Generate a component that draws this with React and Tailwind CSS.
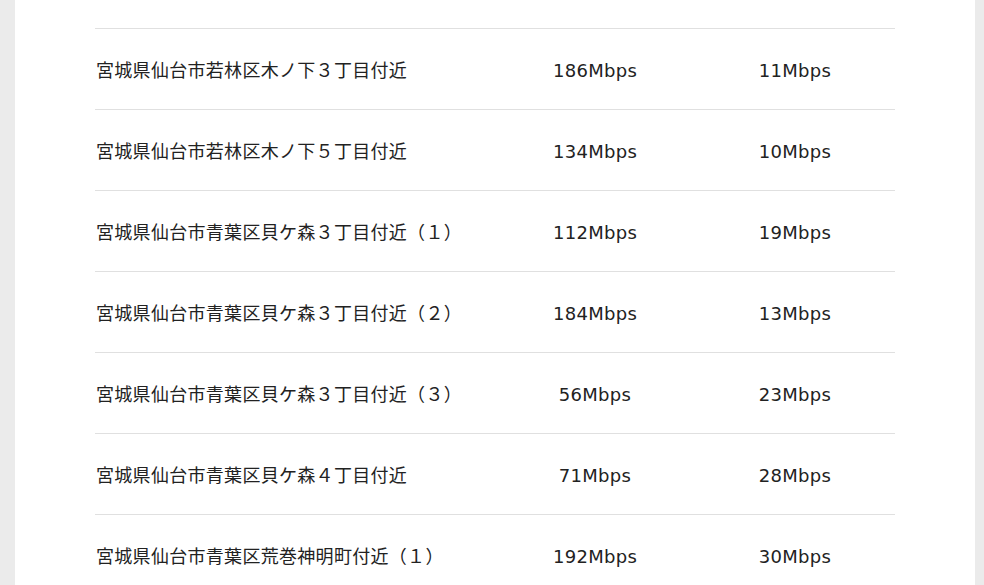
import React from 'react';

const rows = [
  { place: '宮城県仙台市若林区木ノ下３丁目付近', down: '186Mbps', up: '11Mbps' },
  { place: '宮城県仙台市若林区木ノ下５丁目付近', down: '134Mbps', up: '10Mbps' },
  { place: '宮城県仙台市青葉区貝ケ森３丁目付近（１）', down: '112Mbps', up: '19Mbps' },
  { place: '宮城県仙台市青葉区貝ケ森３丁目付近（２）', down: '184Mbps', up: '13Mbps' },
  { place: '宮城県仙台市青葉区貝ケ森３丁目付近（３）', down: '56Mbps', up: '23Mbps' },
  { place: '宮城県仙台市青葉区貝ケ森４丁目付近', down: '71Mbps', up: '28Mbps' },
  { place: '宮城県仙台市青葉区荒巻神明町付近（１）', down: '192Mbps', up: '30Mbps' },
];

export default function App() {
  return (
    <div className="min-h-[585px] h-[585px] overflow-hidden bg-[#ebebeb] pl-[15px]">
      <div
        className="w-[960px] h-full bg-white px-[80px] pt-[28px] text-[#222] text-[18px] tracking-[0.3px]"
        style={{ fontFamily: '"DejaVu Sans", Verdana, "Noto Sans CJK JP", sans-serif' }}
      >
        {rows.map((r) => (
          <div
            key={r.place}
            className="grid grid-cols-[400px_200px_200px] items-center h-[81px] pt-[2px] border-t border-[#e0e0e0]"
          >
            <div className="pl-[1px] whitespace-nowrap">{r.place}</div>
            <div className="text-center">{r.down}</div>
            <div className="text-center">{r.up}</div>
          </div>
        ))}
      </div>
    </div>
  );
}
